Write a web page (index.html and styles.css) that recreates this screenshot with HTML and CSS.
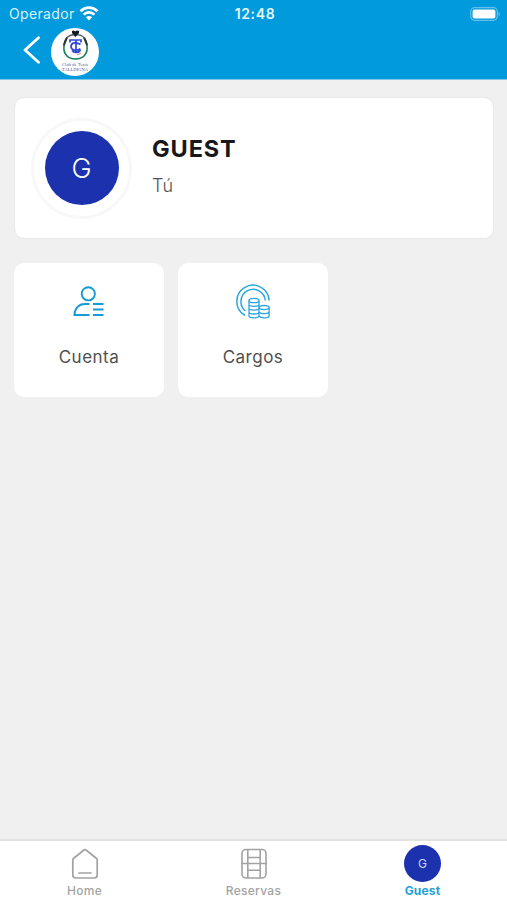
FILE: index.html
```html
<!DOCTYPE html>
<html lang="es">
<head>
<meta charset="utf-8">
<meta name="viewport" content="width=device-width, initial-scale=1">
<title>Guest</title>
<link rel="stylesheet" href="styles.css">
</head>
<body>
<header class="header">
  <div class="status">
    <div class="carrier"><span class="carrier-name">Operador</span>
      <svg class="wifi" width="20" height="15" viewBox="0 0 20 15" fill="none" stroke="#fff" stroke-width="2.7"><path d="M1.500 5.200C6.300.5 13.700.5 18.500 5.200M4.600 8.600c3-3 7.800-3 10.800 0"/><path d="M10 14.400 6.900 11.300c1.700-1.600 4.500-1.600 6.200 0z" fill="#fff" stroke="none"/></svg>
    </div>
    <time class="time">12:48</time>
    <svg class="battery" width="31" height="14" viewBox="0 0 31 14"><rect x=".7" y=".7" width="26.600" height="12.600" rx="4" fill="none" stroke="#69bfe9" stroke-width="1.200"/><rect x="2.600" y="2.600" width="22.800" height="8.800" rx="2" fill="#fff"/><path d="M28.600 5v4q1.400-.6 1.400-2t-1.400-2z" fill="#69bfe9"/></svg>
  </div>
  <nav class="navbar">
    <svg class="back" width="18" height="28" viewBox="0 0 18 28" fill="none" stroke="#fff" stroke-width="2.800" stroke-linecap="round" stroke-linejoin="round"><path d="M15.500 1.800 2 14l13.500 12.200"/></svg>
    <svg class="club" width="48" height="48" viewBox="0 0 48 48">
      <circle cx="24" cy="24" r="24" fill="#fff"/>
      <g fill="none"><path d="M13 18C13 10 18 6.500 24.500 6.500S36 10 36 18" stroke="#59636a" stroke-width="1.300"/><path d="M13 18c-1 8 4 13 11.500 13S37 26 36 18" stroke="#168259" stroke-width="1.600"/><path d="M16 9.500 12.800 17.500M33 9.500l3.200 8" stroke="#293832" stroke-width="2"/></g>
      <path d="M21 3q1.500-1 3.200.5Q26 2 28 3v2l-3.600 4L21 5z" fill="#101820"/>
      <g fill="none" stroke="#3047d2" stroke-width="1.700"><path d="M19 14.500V12h11v2.500M25 12v12.500M29.500 16.500c-4-3-9.500-1.800-9.500 2s5.500 5 9.500 2.200M29.500 22c-2 3.500-7 2.800-8.500.5"/></g>
      <path d="m26 27 4-2" stroke="#e47c85"/>
      <text class="club-text" x="24" y="38" text-anchor="middle" textLength="26">Club de Tenis</text>
      <text class="club-text" x="24" y="43" text-anchor="middle" textLength="26" lengthAdjust="spacingAndGlyphs">TALLDIGNA</text>
    </svg>
  </nav>
</header>
<main class="content">
  <section class="profile">
    <div class="ring"><div class="avatar">G</div></div>
    <div class="identity"><h1 class="name">GUEST</h1><p class="relation">Tú</p></div>
  </section>
  <div class="tiles">
    <a class="tile">
      <svg width="36" height="36" viewBox="0 0 36 36" fill="none" stroke="#159bd7" stroke-width="1.900"><circle cx="17.300" cy="9.800" r="6.600"/><path d="M18.500 20H14C7.500 20 3.500 24.500 3.500 31h15M22 20h10.500M22 25.500h10.500M22 31h10.500"/></svg>
      <span class="tile-label">Cuenta</span>
    </a>
    <a class="tile">
      <svg width="36" height="36" viewBox="0 0 36 36" fill="none" stroke="#2ba6df" stroke-width="1.500"><path d="M10 31.500A16.200 16.200 0 1 1 34.200 16.500M10.500 27A12.200 12.200 0 1 1 30.300 16.500"/><g stroke-width="1.300"><ellipse cx="19" cy="16.500" rx="5" ry="2.200"/><path d="M14 16.500v15.200c0 2.800 10 2.800 10 0V16.500M14 20.300c0 2.800 10 2.800 10 0M14 24.100c0 2.800 10 2.800 10 0M14 27.900c0 2.800 10 2.800 10 0"/><ellipse cx="29.200" cy="23.600" rx="4.900" ry="2.100"/><path d="M34.100 23.600v8.100c0 2.600-8 2.900-10 .5M34.100 27.600c0 2.600-8 2.900-10 .5"/></g></svg>
      <span class="tile-label">Cargos</span>
    </a>
  </div>
</main>
<footer class="tabs">
  <a class="tab">
    <svg width="28" height="32" viewBox="0 0 28 32" fill="none" stroke="#a2a2a2" stroke-width="1.700" stroke-linecap="round" stroke-linejoin="round"><path d="M1.800 12.200Q1.800 11 3 10L13 2q1-.8 2 0l10 8q1.200 1 1.200 2.200V27q0 3-3 3H4.800q-3 0-3-3zM8 25h12"/></svg>
    <span>Home</span>
  </a>
  <a class="tab">
    <svg width="28" height="32" viewBox="0 0 28 32" fill="none" stroke="#a2a2a2" stroke-width="1.600"><rect x="2" y="1.500" width="24" height="28.500" rx="4"/><path d="M7.800 1.500V30M20.200 1.500V30M1 15.500h26M7.800 9.500h12.400M7.800 22.300h12.400"/></svg>
    <span>Reservas</span>
  </a>
  <a class="tab active"><div class="tab-avatar">G</div><span>Guest</span></a>
</footer>
</body>
</html>
```
FILE: styles.css
```css
* { box-sizing: border-box; }
body { margin: 0; height: 900px; display: flex; flex-direction: column; background: #f0f0f0; font-family: Inter, "Liberation Sans", sans-serif; overflow: hidden; }
svg { display: block; flex: none; }
.header { height: 80px; background: #019bdd; border-bottom: 1px solid #80c8eb; color: #fff; }
.status { height: 27px; display: grid; grid-template-columns: 1fr auto 1fr; align-items: center; padding: 0 6px 0 9px; }
.carrier { display: flex; align-items: center; gap: 4px; }
.carrier-name { font-size: 14px; letter-spacing: .35px; color: #d9f1fc; }
.time { font-size: 14px; font-weight: 600; letter-spacing: .65px; color: #e5f7ff; }
.battery { justify-self: end; }
.navbar { display: flex; align-items: center; height: 50px; padding-left: 23px; }
.back { margin-bottom: 4px; }
.club { margin-left: 10px; }
.club-text { font: 4.500px "Liberation Serif", serif; fill: #4e5696; }
.content { flex: 1; padding: 17px 13px 0 14px; }
.profile { height: 142px; display: flex; align-items: center; padding-left: 16px; background: #fff; border: 1px solid #e9e9e9; border-radius: 10px; }
.ring { width: 101px; height: 101px; display: flex; align-items: center; justify-content: center; border: 3px solid #f8f8f8; border-radius: 50%; }
.avatar { width: 74px; height: 74px; border-radius: 50%; background: #1b31ae; color: #fff; display: flex; align-items: center; justify-content: center; font-size: 27px; font-weight: 300; }
.identity { margin: 0 0 4px 20px; }
.name { margin: 0; font-size: 23.500px; line-height: 30px; font-weight: 700; letter-spacing: .9px; color: #18181a; }
.relation { margin: 10px 0 0; font-size: 18px; line-height: 24px; font-weight: 300; letter-spacing: .5px; color: #555; }
.tiles { display: flex; gap: 14px; margin-top: 24px; }
.tile { width: 150px; height: 134px; display: flex; flex-direction: column; align-items: center; padding-top: 21px; background: #fff; border-radius: 10px; }
.tile-label { margin-top: 26px; font-size: 17px; line-height: 22px; letter-spacing: .5px; color: #505050; }
.tabs { height: 61px; display: grid; grid-template-columns: repeat(3, 1fr); background: #fff; border-top: 2px solid #e2e2e2; }
.tab { display: flex; flex-direction: column; align-items: center; padding-top: 7px; color: #a4a4a4; font-size: 12px; line-height: 16px; font-weight: 500; letter-spacing: .3px; }
.tab span { margin-top: 3px; }
.tab.active { padding-top: 4px; color: #229fd6; font-weight: 700; letter-spacing: .2px; }
.tab-avatar { width: 37px; height: 37px; border-radius: 50%; background: #1b31ae; color: #d1d7f5; display: flex; align-items: center; justify-content: center; font-size: 12px; font-weight: 400; }
.tab.active span { margin-top: 1px; }
```
